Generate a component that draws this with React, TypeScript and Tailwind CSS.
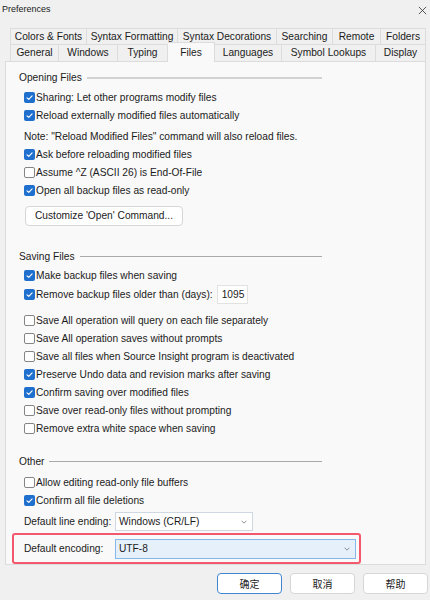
import type { ReactNode } from "react";

const row1 = [
  { label: "Colors & Fonts", w: "w-[77px]" },
  { label: "Syntax Formatting", w: "w-[91px]" },
  { label: "Syntax Decorations", w: "w-[99px]" },
  { label: "Searching", w: "w-[56px]" },
  { label: "Remote", w: "w-[48px]" },
  { label: "Folders", w: "w-[45px]" },
];

const row2 = [
  { label: "General", w: "w-[49px]" },
  { label: "Windows", w: "w-[59px]" },
  { label: "Typing", w: "w-[50px]" },
  { label: "Files", w: "w-[47px]", active: true },
  { label: "Languages", w: "w-[67px]" },
  { label: "Symbol Lookups", w: "w-[94px]" },
  { label: "Display", w: "w-[50px]" },
];

function Box({ checked }: { checked?: boolean }) {
  if (checked) {
    return (
      <span className="flex h-[11px] w-[11px] flex-none items-center justify-center rounded-[2px] bg-[#1f6fcf]">
        <svg viewBox="0 0 10 10" className="h-[9px] w-[9px]">
          <path
            d="M2.2 5.3 4.2 7.2 7.9 3.1"
            fill="none"
            stroke="white"
            strokeWidth="1.2"
            strokeLinecap="round"
            strokeLinejoin="round"
          />
        </svg>
      </span>
    );
  }
  return <span className="h-[11px] w-[11px] flex-none rounded-[2px] border border-[#858585] bg-white" />;
}

function Check({ checked, children }: { checked?: boolean; children: ReactNode }) {
  return (
    <div className="ml-[5px] flex h-[18px] items-center gap-[1px]">
      <Box checked={checked} />
      <span>{children}</span>
    </div>
  );
}

function Group({ title, line, className }: { title: string; line: string; className?: string }) {
  return (
    <div className={`flex h-[16px] w-[303px] items-center ${className ?? ""}`}>
      <span>{title}</span>
      <span className={`ml-[5px] flex-1 ${line}`} />
    </div>
  );
}

function Chevron() {
  return (
    <svg viewBox="0 0 8 5" className="h-[4px] w-[6px]">
      <path d="M0.8 0.8 4 4 7.2 0.8" fill="none" stroke="#6b6b6b" strokeWidth="1" />
    </svg>
  );
}

export default function App() {
  return (
    <div className="flex h-[600px] w-[430px] flex-col bg-[#f0f0f0] text-[10.2px] text-[#1b1b1b] font-['Liberation_Sans',Arial,sans-serif]">
      <div className="flex h-[20px] items-center justify-between pl-[2px] pr-[3px]">
        <span className="text-[9px] text-[#222]">Preferences</span>
        <svg viewBox="0 0 10 10" className="h-[9px] w-[9px]">
          <path d="M1 1 9 9 M9 1 1 9" stroke="#333" strokeWidth="0.9" />
        </svg>
      </div>

      <div className="mt-[8px] flex flex-col pl-[10px]">
        <div className="flex h-[16px]">
          {row1.map((t) => (
            <div
              key={t.label}
              className={`${t.w} flex items-center justify-center border border-b-0 border-l-0 border-[#dcdcdc] first:border-l bg-[#f0f0f0]`}
            >
              {t.label}
            </div>
          ))}
        </div>
        <div className="flex h-[17px]">
          {row2.map((t) =>
            t.active ? (
              <div
                key={t.label}
                className={`${t.w} z-10 -mt-[2px] flex h-[20px] items-start justify-center border border-b-0 border-l-0 border-[#dcdcdc] bg-[#f9f9f9] pt-[2px]`}
              >
                {t.label}
              </div>
            ) : (
              <div
                key={t.label}
                className={`${t.w} flex items-center justify-center border border-b-0 border-l-0 border-[#dcdcdc] first:border-l bg-[#f0f0f0]`}
              >
                {t.label}
              </div>
            ),
          )}
        </div>
      </div>

      <div className="ml-[5px] flex h-[504px] w-[421px] flex-col border border-[#dcdcdc] bg-[#f9f9f9] pl-[13px] pt-[8px]">
        <Group title="Opening Files" line="h-[2px] bg-[#d2d2d2]" />
        <div className="mt-[3px] flex flex-col">
          <Check checked>Sharing: Let other programs modify files</Check>
          <Check checked>Reload externally modified files automatically</Check>
          <div className="ml-[5px] flex h-[21px] items-center pt-[2px]">
            Note: "Reload Modified Files" command will also reload files.
          </div>
          <Check checked>Ask before reloading modified files</Check>
          <Check>Assume ^Z (ASCII 26) is End-Of-File</Check>
          <Check checked>Open all backup files as read-only</Check>
        </div>
        <button className="ml-[6px] mt-[6px] flex h-[20px] w-[158px] items-center justify-center rounded-[4px] border border-[#d6d6d6] bg-white">
          Customize 'Open' Command...
        </button>

        <Group title="Saving Files" line="h-px bg-[#a9a9a9]" className="mt-[23px]" />
        <div className="mt-[2px] flex flex-col">
          <Check checked>Make backup files when saving</Check>
          <div className="ml-[5px] flex h-[20px] items-center gap-[1px]">
            <Box checked />
            <span>Remove backup files older than (days):</span>
            <span className="ml-[3px] flex h-[19px] w-[31px] items-center border border-[#e2e2e2] bg-white pl-[4px]">
              1095
            </span>
          </div>
          <div className="mt-[7px] flex flex-col">
            <Check>Save All operation will query on each file separately</Check>
            <Check>Save All operation saves without prompts</Check>
            <Check>Save all files when Source Insight program is deactivated</Check>
            <Check checked>Preserve Undo data and revision marks after saving</Check>
            <Check checked>Confirm saving over modified files</Check>
            <Check>Save over read-only files without prompting</Check>
            <Check>Remove extra white space when saving</Check>
          </div>
        </div>

        <Group title="Other" line="h-px bg-[#a9a9a9]" className="mt-[16px]" />
        <div className="mt-[4px] flex flex-col">
          <Check>Allow editing read-only file buffers</Check>
          <Check checked>Confirm all file deletions</Check>
        </div>
        <div className="ml-[5px] mt-[3px] flex h-[19px] items-center">
          <span className="w-[91px]">Default line ending:</span>
          <div className="flex h-[19px] w-[138px] items-center justify-between border border-[#cfd8e2] bg-white pl-[3px] pr-[5px]">
            <span>Windows (CR/LF)</span>
            <Chevron />
          </div>
        </div>
        <div className="-ml-[7px] mt-[2px] flex h-[31px] w-[349px] items-center rounded-[3px] border-2 border-[#f2596c] pl-[10px]">
          <span className="w-[91px]">Default encoding:</span>
          <div className="flex h-[20px] w-[241px] items-center justify-between border border-[#86b7ea] bg-[#e6f0fb] pl-[3px] pr-[5px]">
            <span>UTF-8</span>
            <Chevron />
          </div>
        </div>
      </div>

      <div className="mt-[8px] flex justify-end gap-[8px] pr-[2px]">
        <button className="flex h-[21px] w-[65px] items-center justify-center rounded-[4px] border border-[#3f86d0] bg-white font-['Noto_Sans_CJK_SC',sans-serif] text-[10px]">
          确定
        </button>
        <button className="flex h-[21px] w-[65px] items-center justify-center rounded-[4px] border border-[#d6d6d6] bg-white font-['Noto_Sans_CJK_SC',sans-serif] text-[10px]">
          取消
        </button>
        <button className="flex h-[21px] w-[65px] items-center justify-center rounded-[4px] border border-[#d6d6d6] bg-white font-['Noto_Sans_CJK_SC',sans-serif] text-[10px]">
          帮助
        </button>
      </div>
    </div>
  );
}
